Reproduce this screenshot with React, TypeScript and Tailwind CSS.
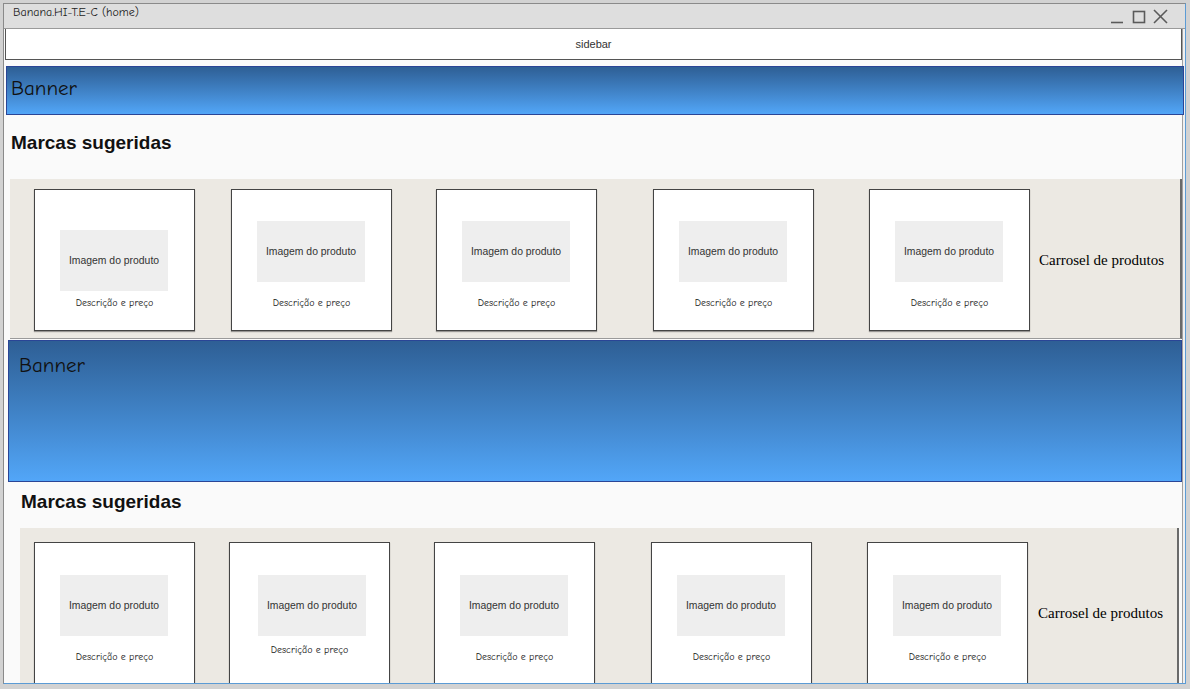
import React from "react";

const sketch = "'Comic Sans MS', 'Comic Neue', 'Noto Sans', sans-serif";
const arial = "'Liberation Sans', Arial, sans-serif";
const serif = "'Liberation Serif', 'Times New Roman', serif";

type CardSpec = { ml: string; pt: string; pl: string; mt: string };

const row1: CardSpec[] = [
  { ml: "ml-[24px]", pt: "pt-[40px]", pl: "pl-[25px]", mt: "mt-[6px]" },
  { ml: "ml-[36px]", pt: "pt-[31px]", pl: "pl-[25px]", mt: "mt-[15px]" },
  { ml: "ml-[44px]", pt: "pt-[31px]", pl: "pl-[25px]", mt: "mt-[15px]" },
  { ml: "ml-[56px]", pt: "pt-[31px]", pl: "pl-[25px]", mt: "mt-[15px]" },
  { ml: "ml-[55px]", pt: "pt-[31px]", pl: "pl-[25px]", mt: "mt-[15px]" },
];

const row2: CardSpec[] = [
  { ml: "ml-[14px]", pt: "pt-[32px]", pl: "pl-[25px]", mt: "mt-[15px]" },
  { ml: "ml-[34px]", pt: "pt-[32px]", pl: "pl-[28px]", mt: "mt-[8px]" },
  { ml: "ml-[44px]", pt: "pt-[32px]", pl: "pl-[25px]", mt: "mt-[15px]" },
  { ml: "ml-[56px]", pt: "pt-[32px]", pl: "pl-[25px]", mt: "mt-[15px]" },
  { ml: "ml-[55px]", pt: "pt-[32px]", pl: "pl-[25px]", mt: "mt-[15px]" },
];

function Card({ spec }: { spec: CardSpec }) {
  return (
    <div
      className={`${spec.ml} shrink-0 w-[161px] h-[142px] bg-white border border-[#444] shadow-[0_1px_1px_rgba(0,0,0,0.35)] flex flex-col`}
    >
      <div className={`${spec.pt} ${spec.pl}`}>
        <div
          className="w-[108px] h-[61px] bg-[#eeeeee] flex items-center justify-center text-[10.4px] leading-[12px] text-[#333]"
          style={{ fontFamily: arial }}
        >
          Imagem do produto
        </div>
      </div>
      <div
        className={`${spec.mt} w-full text-center text-[10px] leading-[12px] text-[#111]`}
        style={{ fontFamily: sketch }}
      >
        Descrição e preço
      </div>
    </div>
  );
}

function Carousel({ cards, textMl }: { cards: CardSpec[]; textMl: string }) {
  return (
    <>
      {cards.map((c, i) => (
        <Card key={i} spec={c} />
      ))}
      <div
        className={`${textMl} text-[15px] leading-[18px] text-black whitespace-nowrap`}
        style={{ fontFamily: serif }}
      >
        Carrosel de produtos
      </div>
    </>
  );
}

export default function App() {
  return (
    <div className="w-[1190px] h-[689px] bg-[#d2d2d2] pl-[3px] pt-[3px] overflow-hidden">
      <div className="w-[1183px] h-[681px] border-l border-t border-[#8a8a8a] border-r border-r-[#5b9bd5] border-b border-b-[#5b9bd5] flex flex-col overflow-hidden">
        {/* title bar */}
        <div className="h-[25px] shrink-0 bg-[#dedede] border-b border-[#9a9a9a] flex items-start">
          <div
            className="pl-[9px] pt-[1px] text-[12px] leading-[15px] text-[#222]"
            style={{ fontFamily: sketch }}
          >
            Banana.HI-T.E-C (home)
          </div>
          <svg
            className="ml-auto mr-[15px]"
            width="60"
            height="24"
            viewBox="0 0 60 24"
            fill="none"
            stroke="#5a5a5a"
            strokeWidth="1.6"
          >
            <line x1="1" y1="18.5" x2="13" y2="18.5" />
            <rect x="23.5" y="7.5" width="11" height="11" />
            <line x1="44" y1="6" x2="57" y2="19" />
            <line x1="57" y1="6" x2="44" y2="19" />
          </svg>
        </div>

        {/* content */}
        <div className="flex-1 bg-[#fafafa] overflow-hidden shadow-[inset_-2px_0_0_#f0f0f0,inset_-3px_0_0_#a0a0a0]">
          <div
            className="ml-[1px] w-[1177px] h-[31px] bg-white border-x border-b border-[#555] flex items-center justify-center text-[11px] text-[#333]"
            style={{ fontFamily: arial }}
          >
            sidebar
          </div>

          <div className="mt-[6px] ml-[2px] w-[1178px] h-[49px] border border-[#2a4596] bg-gradient-to-b from-[#2e5f95] to-[#52a6f8]">
            <div
              className="pl-[4px] pt-[7px] text-[21px] leading-[28px] text-[#111]"
              style={{ fontFamily: sketch }}
            >
              Banner
            </div>
          </div>

          <div className="h-[64px] pl-[7px] pt-[17px]">
            <div
              className="text-[19px] leading-[22px] font-bold text-[#111]"
              style={{ fontFamily: arial }}
            >
              Marcas sugeridas
            </div>
          </div>

          <div className="ml-[6px] w-[1172px] h-[160px] bg-[#ece9e3] border-r-2 border-r-[#6a6a6a] border-b border-b-[#9a9a9a] pt-[10px] flex items-start">
            <div className="flex items-center h-[142px]">
              <Carousel cards={row1} textMl="ml-[9px]" />
            </div>
          </div>

          <div className="mt-[1px] ml-[4px] w-[1174px] h-[142px] border border-[#2a4596] bg-gradient-to-b from-[#2e5f95] to-[#52a6f8]">
            <div
              className="pl-[10px] pt-[10px] text-[21px] leading-[28px] text-[#111]"
              style={{ fontFamily: sketch }}
            >
              Banner
            </div>
          </div>

          <div className="h-[46px] pl-[17px] pt-[9px]">
            <div
              className="text-[19px] leading-[22px] font-bold text-[#111]"
              style={{ fontFamily: arial }}
            >
              Marcas sugeridas
            </div>
          </div>

          <div className="ml-[16px] w-[1159px] h-[170px] bg-[#ece9e3] border-r-2 border-r-[#6a6a6a] pt-[14px] flex items-start">
            <div className="flex items-center h-[142px]">
              <Carousel cards={row2} textMl="ml-[10px]" />
            </div>
          </div>
        </div>
      </div>
    </div>
  );
}
